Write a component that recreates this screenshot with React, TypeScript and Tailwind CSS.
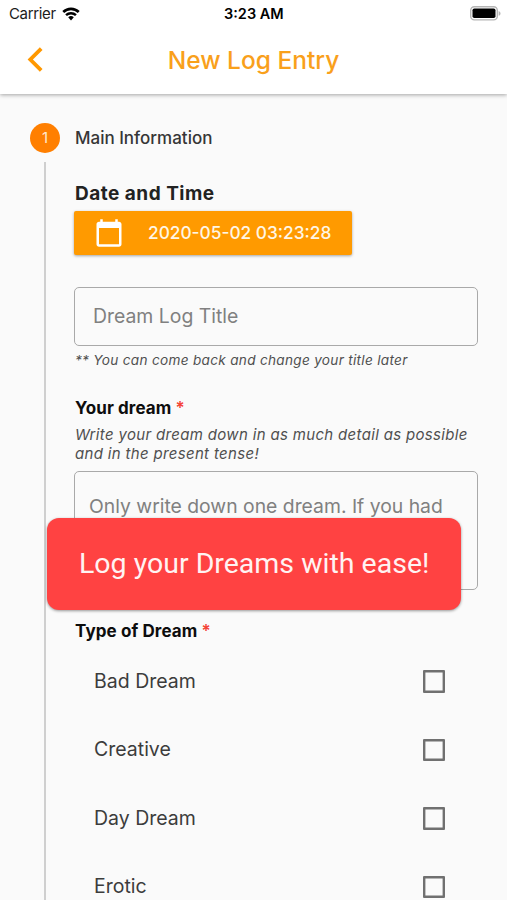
import React from "react";
import { MdCalendarToday } from "react-icons/md";

const dreamTypes = ["Bad Dream", "Creative", "Day Dream", "Erotic"];

const StatusBar: React.FC = () => (
  <div className="relative flex h-[27px] items-center justify-between pl-[9px] pr-[6px] text-[15px] text-[#1c1c1c]">
    <div className="flex items-center gap-[6px]">
      <span className="pt-px tracking-[-0.35px]">Carrier</span>
      <svg width="18" height="14" viewBox="0 0 19 15" fill="none" stroke="#000">
        <path d="M1.2 5.4a11.8 11.8 0 0 1 16.6 0" strokeWidth="2.8" />
        <path d="M4.2 8.8a7.5 7.5 0 0 1 10.6 0" strokeWidth="2.6" />
        <path d="M9.5 14.4l-3-3.3a4.3 4.3 0 0 1 6 0z" fill="#000" stroke="none" />
      </svg>
    </div>
    <span className="absolute left-[224px] text-[14.5px] font-semibold text-black">3:23 AM</span>
    <svg width="31" height="15" viewBox="0 0 31 15">
      <rect x="0.7" y="0.7" width="26.6" height="13.2" rx="3.6" fill="#fff" stroke="#b5b5b5" strokeWidth="1.4" />
      <rect x="2.5" y="2.5" width="23" height="9.6" rx="1.8" fill="#000" />
      <path d="M28.6 5v4.8c1.2-.5 1.9-1.3 1.9-2.4s-.7-1.9-1.9-2.4z" fill="#b5b5b5" />
    </svg>
  </div>
);

const Header: React.FC = () => (
  <header className="relative z-10 h-[94px] shrink-0 bg-white shadow-[0_1px_4px_rgba(0,0,0,0.35)]">
    <StatusBar />
    <div className="grid h-[66px] grid-cols-[80px_1fr_80px] items-center">
      <svg className="ml-[27px]" width="17" height="26" viewBox="0 0 17 26" fill="none">
        <path d="M14.2 1.6L3.3 12.5l10.9 10.9" stroke="#ff9800" strokeWidth="3.8" />
      </svg>
      <h1 className="text-center text-[24.5px] font-medium whitespace-nowrap text-[#f9a01b]">New Log Entry</h1>
    </div>
  </header>
);

const Required: React.FC = () => <span className="font-semibold text-[#f44336]">*</span>;

const Toast: React.FC = () => (
  <div className="absolute left-[47px] top-[518px] z-20 flex h-[92px] w-[414px] items-center rounded-[12px] bg-[#ff4242] pl-[32px] shadow-[0_1px_3px_rgba(0,0,0,0.4)]">
    <span className="font-['Roboto',sans-serif] text-[28.5px] whitespace-nowrap text-[#fff3f2]">Log your Dreams with ease!</span>
  </div>
);

const App: React.FC = () => {
  return (
    <div className="relative flex h-[900px] w-[507px] flex-col overflow-hidden bg-[#fafafa] font-['Inter',sans-serif]">
      <Header />

      <main className="flex flex-1">
        <div className="flex w-[75px] shrink-0 flex-col items-center pl-[15px] pt-[29px]">
          <div className="flex size-[30px] shrink-0 items-center justify-center rounded-full bg-[#ff7f00] text-[15px] text-[#ffe8cf]">1</div>
          <div className="mt-[9px] w-[2px] flex-1 bg-[#cfcfcf]" />
        </div>

        <div className="flex w-[403px] flex-col pt-[29px]">
          <h2 className="h-[30px] text-[17px] leading-[31px] font-medium whitespace-nowrap text-[#363636]">Main Information</h2>

          <h3 className="mt-[29px] h-[29px] text-[19px] leading-[24px] font-bold tracking-[0.5px] whitespace-nowrap text-[#222]">Date and Time</h3>
          <button className="-ml-px flex h-[44px] w-[278px] items-center rounded-[2px] bg-[#ff9a00] pl-[20px] text-[#fff6e5] shadow-[0_1px_3px_rgba(0,0,0,0.35)]">
            <MdCalendarToday className="size-[30px] text-white" />
            <span className="ml-[24px] text-[17.3px] font-medium whitespace-nowrap">2020-05-02 03:23:28</span>
          </button>

          <div className="-ml-px mt-[32px] flex h-[59px] items-center rounded-[5px] border border-[#a9a9a9] pl-[18px] text-[19.4px] text-[#808080]">
            <span className="whitespace-nowrap">Dream Log Title</span>
          </div>
          <p className="mt-[4px] h-[20px] text-[13.6px] leading-[20px] tracking-[0.3px] whitespace-nowrap text-[#4f4f4f] italic">
            ** You can come back and change your title later
          </p>

          <h3 className="mt-[28px] text-[17px] leading-[20px] font-bold tracking-[0.1px] whitespace-nowrap text-[#0d0d0d]">
            Your dream <Required />
          </h3>
          <p className="mt-[7px] text-[15px] leading-[19px] tracking-[0.33px] whitespace-nowrap text-[#4f4f4f] italic">
            <span className="block">Write your dream down in as much detail as possible</span>
            <span className="block">and in the present tense!</span>
          </p>
          <div className="-ml-px mt-[8px] h-[119px] rounded-[5px] border border-[#a9a9a9] pl-[14px] pt-[21px] text-[19.35px] leading-[26px] text-[#808080]">
            <span className="whitespace-nowrap">Only write down one dream. If you had</span>
          </div>

          <h3 className="mt-[31px] text-[17px] leading-[20px] font-bold tracking-[0.1px] whitespace-nowrap text-[#0d0d0d]">
            Type of Dream <Required />
          </h3>
          <ul className="mt-[6px]">
            {dreamTypes.map((type) => (
              <li key={type} className="flex h-[68.5px] items-center justify-between pl-[19px] pr-[33px] text-[19.5px] text-[#3c3c3c]">
                <span>{type}</span>
                <span className="size-[22.5px] rounded-[1px] shadow-[inset_0_0_0_2.4px_#707070]" />
              </li>
            ))}
          </ul>
        </div>
      </main>

      <Toast />
    </div>
  );
};

export default App;
